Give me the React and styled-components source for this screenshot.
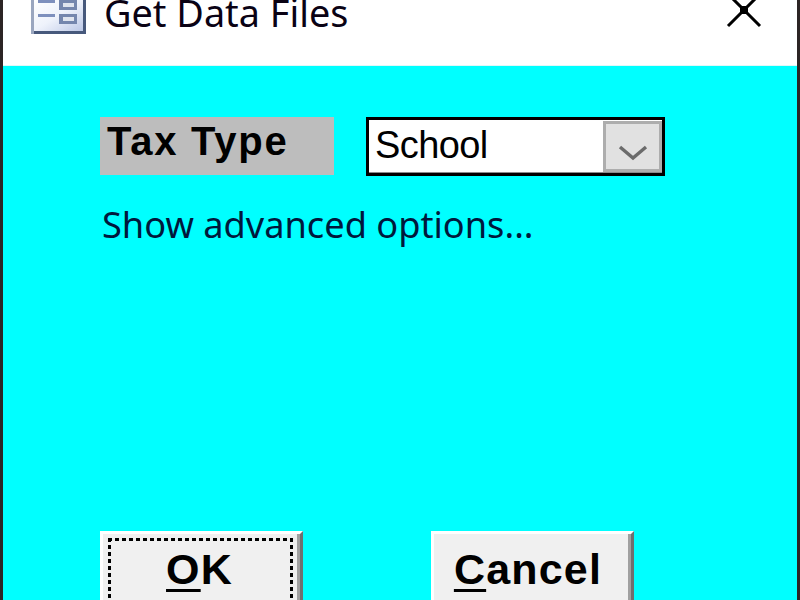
import React from "react";
import styled, { createGlobalStyle } from "styled-components";

const GlobalStyle = createGlobalStyle`
  html, body {
    margin: 0;
    padding: 0;
    overflow: hidden;
  }
  body {
    font-family: "Liberation Sans", Arial, sans-serif;
  }
`;

export default function App() {
  return (
    <>
      <GlobalStyle />
      <Dialog>
        <TitleBar>
          <AppIcon />
          <Title>Get Data Files</Title>
          <CloseIcon />
        </TitleBar>
        <Client>
          <FieldRow>
            <FieldLabel>Tax Type</FieldLabel>
            <Combo>
              <ComboValue>School</ComboValue>
              <ComboButton>
                <Chevron />
              </ComboButton>
            </Combo>
          </FieldRow>
          <AdvancedLink>Show advanced options...</AdvancedLink>
          <ButtonRow>
            <DialogButton>
              <FocusRing>
                <ButtonText>
                  <Mnemonic>O</Mnemonic>K
                </ButtonText>
              </FocusRing>
            </DialogButton>
            <DialogButton>
              <PlainFace>
                <ButtonText>
                  <Mnemonic>C</Mnemonic>ancel
                </ButtonText>
              </PlainFace>
            </DialogButton>
          </ButtonRow>
        </Client>
      </Dialog>
    </>
  );
}

function AppIcon() {
  return (
    <IconSvg width="55" height="34" viewBox="0 0 55 34">
      <defs>
        <linearGradient id="sheet" x1="0" y1="0" x2="1" y2="1">
          <stop offset="0" stopColor="#ffffff" />
          <stop offset="0.5" stopColor="#eef2fb" />
          <stop offset="1" stopColor="#bcc8e6" />
        </linearGradient>
      </defs>
      <rect x="0" y="0" width="55" height="34" fill="#9aa6bf" />
      <rect x="3" y="0" width="52" height="34" fill="#47597c" />
      <rect x="3" y="0" width="49" height="31" fill="url(#sheet)" />
      <rect x="7" y="0" width="17" height="3" fill="#7e90bd" />
      <rect x="7" y="14" width="17" height="3" fill="#7e90bd" />
      <rect x="28" y="0" width="18" height="10" fill="#7486ad" />
      <rect x="32" y="3" width="11" height="4" fill="#dfe4ee" />
      <rect x="28" y="14" width="18" height="10" fill="#7486ad" />
      <rect x="32" y="17" width="11" height="4" fill="#dfe4ee" />
    </IconSvg>
  );
}

function CloseIcon() {
  return (
    <CloseSvg width="36" height="36" viewBox="0 0 36 36">
      <path d="M2 34L34 2M2 2L34 34" stroke="#000" strokeWidth="3" fill="none" />
      <rect x="14" y="14" width="8" height="8" fill="#000" />
    </CloseSvg>
  );
}

function Chevron() {
  return (
    <svg width="30" height="18" viewBox="0 0 30 18">
      <path d="M2 3L15 14L28 3" stroke="#6b6b6b" strokeWidth="3.4" fill="none" />
    </svg>
  );
}

const Dialog = styled.div`
  width: 800px;
  height: 600px;
  box-sizing: border-box;
  border-left: 3px solid #2c2424;
  border-right: 3px solid #2c2424;
  display: flex;
  flex-direction: column;
  overflow: hidden;
`;

const TitleBar = styled.div`
  height: 66px;
  flex: none;
  box-sizing: border-box;
  background: #fff;
  border-bottom: 1px solid #dff8f8;
  padding-left: 28px;
  padding-right: 35px;
  display: flex;
  align-items: flex-start;
`;

const IconSvg = styled.svg`
  display: block;
  flex: none;
`;

const Title = styled.div`
  margin-left: 18px;
  margin-top: -10px;
  font-family: "Noto Sans", sans-serif;
  font-size: 37.8px;
  line-height: 46px;
  color: #0a0214;
  white-space: nowrap;
`;

const CloseSvg = styled.svg`
  display: block;
  flex: none;
  margin-left: auto;
  margin-top: -8px;
`;

const Client = styled.div`
  flex: 1;
  background: #00ffff;
  padding: 51px 0 0 97px;
  display: flex;
  flex-direction: column;
`;

const FieldRow = styled.div`
  display: flex;
  align-items: flex-start;
  gap: 32px;
`;

const FieldLabel = styled.div`
  width: 234px;
  height: 58px;
  box-sizing: border-box;
  background: #bdbdbd;
  padding-left: 7px;
  font-weight: 700;
  font-size: 40px;
  line-height: 48px;
  letter-spacing: 1.75px;
  color: #000;
  white-space: nowrap;
`;

const Combo = styled.div`
  width: 299px;
  height: 59px;
  box-sizing: border-box;
  border: 3px solid #000;
  background: #fff;
  box-shadow: inset 0 -1px 0 #8a8a8a;
  display: flex;
  align-items: stretch;
  padding: 1px 0 1px 0;
`;

const ComboValue = styled.div`
  flex: 1;
  padding-left: 6px;
  font-size: 38px;
  line-height: 48px;
  letter-spacing: -0.6px;
  color: #000;
`;

const ComboButton = styled.div`
  width: 59px;
  box-sizing: border-box;
  background: #e1e1e1;
  border: 3px solid #adadad;
  display: flex;
  align-items: center;
  justify-content: center;
  padding-top: 12px;
`;

const AdvancedLink = styled.div`
  margin-top: 25px;
  margin-left: 2px;
  font-family: "Noto Sans", sans-serif;
  font-size: 36.2px;
  line-height: 46px;
  color: #00183c;
  white-space: nowrap;
`;

const ButtonRow = styled.div`
  margin-top: 284px;
  display: flex;
  gap: 128px;
`;

const DialogButton = styled.div`
  width: 203px;
  height: 78px;
  flex: none;
  box-sizing: border-box;
  background: #f0f0f0;
  border-top: 3px solid #fff;
  border-left: 3px solid #fff;
  border-right: 3px solid #6f6f6f;
  box-shadow: inset -3px 0 0 #a0a0a0;
  padding: 4px 7px 0 5px;
`;

const FocusRing = styled.div`
  height: 100%;
  box-sizing: border-box;
  background-image:
    repeating-linear-gradient(to right, #000 0 4px, transparent 4px 7px),
    repeating-linear-gradient(to bottom, #000 0 4px, transparent 4px 7px),
    repeating-linear-gradient(to bottom, #000 0 4px, transparent 4px 7px);
  background-size: 100% 3px, 3px 100%, 3px 100%;
  background-position: 0 0, 0 0, 100% 0;
  background-repeat: no-repeat;
  display: flex;
  justify-content: center;
  padding-right: 2px;
`;

const PlainFace = styled.div`
  height: 100%;
  display: flex;
  justify-content: center;
  padding-right: 7px;
`;

const ButtonText = styled.span`
  font-weight: 700;
  font-size: 43px;
  line-height: 62px;
  letter-spacing: 1.2px;
  color: #000;
  white-space: nowrap;
`;

const Mnemonic = styled.span`
  text-decoration: underline;
  text-decoration-thickness: 3px;
  text-underline-offset: 5px;
`;
